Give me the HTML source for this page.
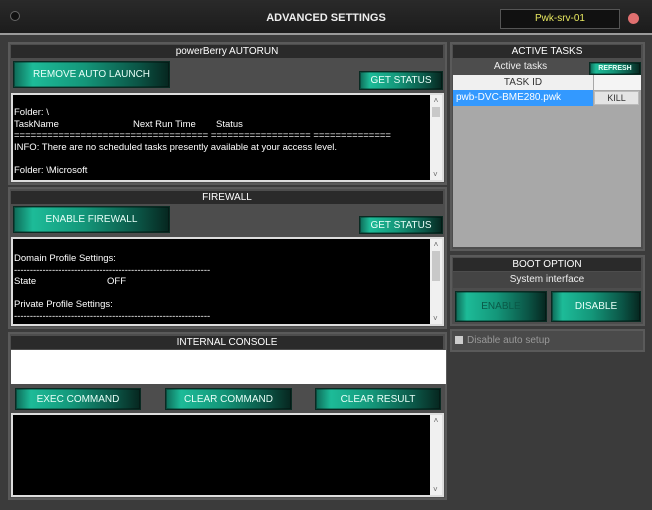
<!DOCTYPE html><html><head><style>
*{box-sizing:border-box;margin:0;padding:0}
body{width:652px;height:510px;background:#3b3b3b;font-family:"Liberation Sans",sans-serif;font-size:10px;color:#fff;position:relative;overflow:hidden}
.a{position:absolute}
.top{left:0;top:0;width:652px;height:35px;background:linear-gradient(#2a2a2a,#1c1c1c);border-bottom:2px solid #9a9a9a}
.panel{background:#4d4d4d;border:2px solid #5a5a5a}
.hdr{background:#2a2a2a;text-align:center;font-size:10px;line-height:13px;color:#fff}
.btn{background:linear-gradient(90deg,#0e6b58 0%,#1dbb98 12%,#14977a 45%,#0b5546 80%,#06261f 100%);border:1px solid #0a2a22;color:#e8fff8;text-align:center;font-size:10px;box-shadow:inset 0 0 0 1px rgba(0,0,0,.3)}
.tb{background:#000;border:2px solid #ddd;font-size:9.5px;line-height:11.5px;padding:0 0 0 1px;overflow:hidden;white-space:nowrap}
.sb{right:0;top:0;bottom:0;width:12px;background:#f0f0f0;color:#666;font-size:8px;text-align:center}
.sb i{position:absolute;left:2px;width:8px;background:#c8c8c8}
</style></head><body>
<div class="a top"></div>
<div class="a" style="left:10px;top:11px;width:10px;height:10px;border-radius:50%;background:#111;border:1px solid #666"></div>
<div class="a" style="left:0;top:12px;width:652px;text-align:center;font-size:11px;font-weight:bold;color:#eee">ADVANCED SETTINGS</div>
<div class="a" style="left:500px;top:9px;width:120px;height:20px;background:#111;border:1px solid #555;color:#e8e860;text-align:center;line-height:18px;font-size:10px">Pwk-srv-01</div>
<div class="a" style="left:628px;top:13px;width:11px;height:11px;border-radius:50%;background:#e07070"></div>

<div class="a panel" style="left:8px;top:42px;width:439px;height:143px"></div>
<div class="a hdr" style="left:11px;top:45px;width:432px">powerBerry AUTORUN</div>
<div class="a btn" style="left:13px;top:61px;width:157px;height:27px;line-height:26px">REMOVE AUTO LAUNCH</div>
<div class="a btn" style="left:359px;top:71px;width:84px;height:19px;line-height:18px">GET STATUS</div>
<div class="a tb" style="left:11px;top:93px;width:433px;height:89px"><div style="padding-top:12px">Folder: \<br>TaskName<span style="position:absolute;left:120px">Next Run Time</span><span style="position:absolute;left:203px">Status</span><br>=================================== ================== ==============<br>INFO: There are no scheduled tasks presently available at your access level.<br><br>Folder: \Microsoft</div><div class="a sb">˄<i style="top:12px;height:10px"></i><span style="position:absolute;bottom:0;left:3px">˅</span></div></div>

<div class="a panel" style="left:8px;top:187px;width:439px;height:142px"></div>
<div class="a hdr" style="left:11px;top:191px;width:432px">FIREWALL</div>
<div class="a btn" style="left:13px;top:206px;width:157px;height:27px;line-height:26px">ENABLE FIREWALL</div>
<div class="a btn" style="left:359px;top:216px;width:84px;height:18px;line-height:17px">GET STATUS</div>
<div class="a tb" style="left:11px;top:237px;width:433px;height:89px"><div style="padding-top:14px">Domain Profile Settings:<br>--------------------------------------------------------------<br>State<span style="position:absolute;left:94px">OFF</span><br><br>Private Profile Settings:<br>--------------------------------------------------------------</div><div class="a sb">˄<i style="top:12px;height:30px"></i><span style="position:absolute;bottom:0;left:3px">˅</span></div></div>

<div class="a panel" style="left:8px;top:332px;width:439px;height:168px"></div>
<div class="a hdr" style="left:11px;top:336px;width:432px">INTERNAL CONSOLE</div>
<div class="a" style="left:11px;top:350px;width:435px;height:34px;background:#fff"></div>
<div class="a btn" style="left:15px;top:388px;width:126px;height:22px;line-height:21px">EXEC COMMAND</div>
<div class="a btn" style="left:165px;top:388px;width:127px;height:22px;line-height:21px">CLEAR COMMAND</div>
<div class="a btn" style="left:315px;top:388px;width:126px;height:22px;line-height:21px">CLEAR RESULT</div>
<div class="a tb" style="left:11px;top:413px;width:433px;height:84px"><div class="a sb">˄<span style="position:absolute;bottom:0;left:3px">˅</span></div></div>

<div class="a panel" style="left:450px;top:42px;width:195px;height:209px"></div>
<div class="a hdr" style="left:453px;top:45px;width:188px">ACTIVE TASKS</div>
<div class="a" style="left:453px;top:61px;width:135px;text-align:center;color:#eee">Active tasks</div>
<div class="a btn" style="left:589px;top:62px;width:52px;height:13px;line-height:12px;font-size:7px;font-weight:bold">REFRESH</div>
<div class="a" style="left:453px;top:75px;width:188px;height:172px;background:#a8a8a8"></div>
<div class="a" style="left:453px;top:75px;width:140px;height:15px;background:#f0f0f0;color:#333;text-align:center;line-height:15px">TASK ID</div>
<div class="a" style="left:594px;top:75px;width:47px;height:15px;background:#f4f4f4"></div>
<div class="a" style="left:453px;top:90px;width:140px;height:16px;background:#3399ff;line-height:16px;padding-left:3px">pwb-DVC-BME280.pwk</div>
<div class="a" style="left:594px;top:91px;width:45px;height:14px;background:#e4e4e4;border:1px solid #bbb;color:#333;text-align:center;line-height:12px;font-size:9px">KILL</div>

<div class="a panel" style="left:450px;top:255px;width:195px;height:71px"></div>
<div class="a hdr" style="left:453px;top:258px;width:188px">BOOT OPTION</div>
<div class="a" style="left:453px;top:272px;width:188px;height:16px;background:#444;text-align:center;line-height:16px;color:#eee">System interface</div>
<div class="a btn" style="left:455px;top:291px;width:92px;height:31px;line-height:30px;color:#0a5a48">ENABLE</div>
<div class="a btn" style="left:551px;top:291px;width:90px;height:31px;line-height:30px">DISABLE</div>

<div class="a panel" style="left:450px;top:329px;width:195px;height:23px;background:#4a4a4a"></div>
<div class="a" style="left:455px;top:336px;width:8px;height:8px;background:#ccc"></div>
<div class="a" style="left:467px;top:335px;color:#999;font-size:10px">Disable auto setup</div>
</body></html>
